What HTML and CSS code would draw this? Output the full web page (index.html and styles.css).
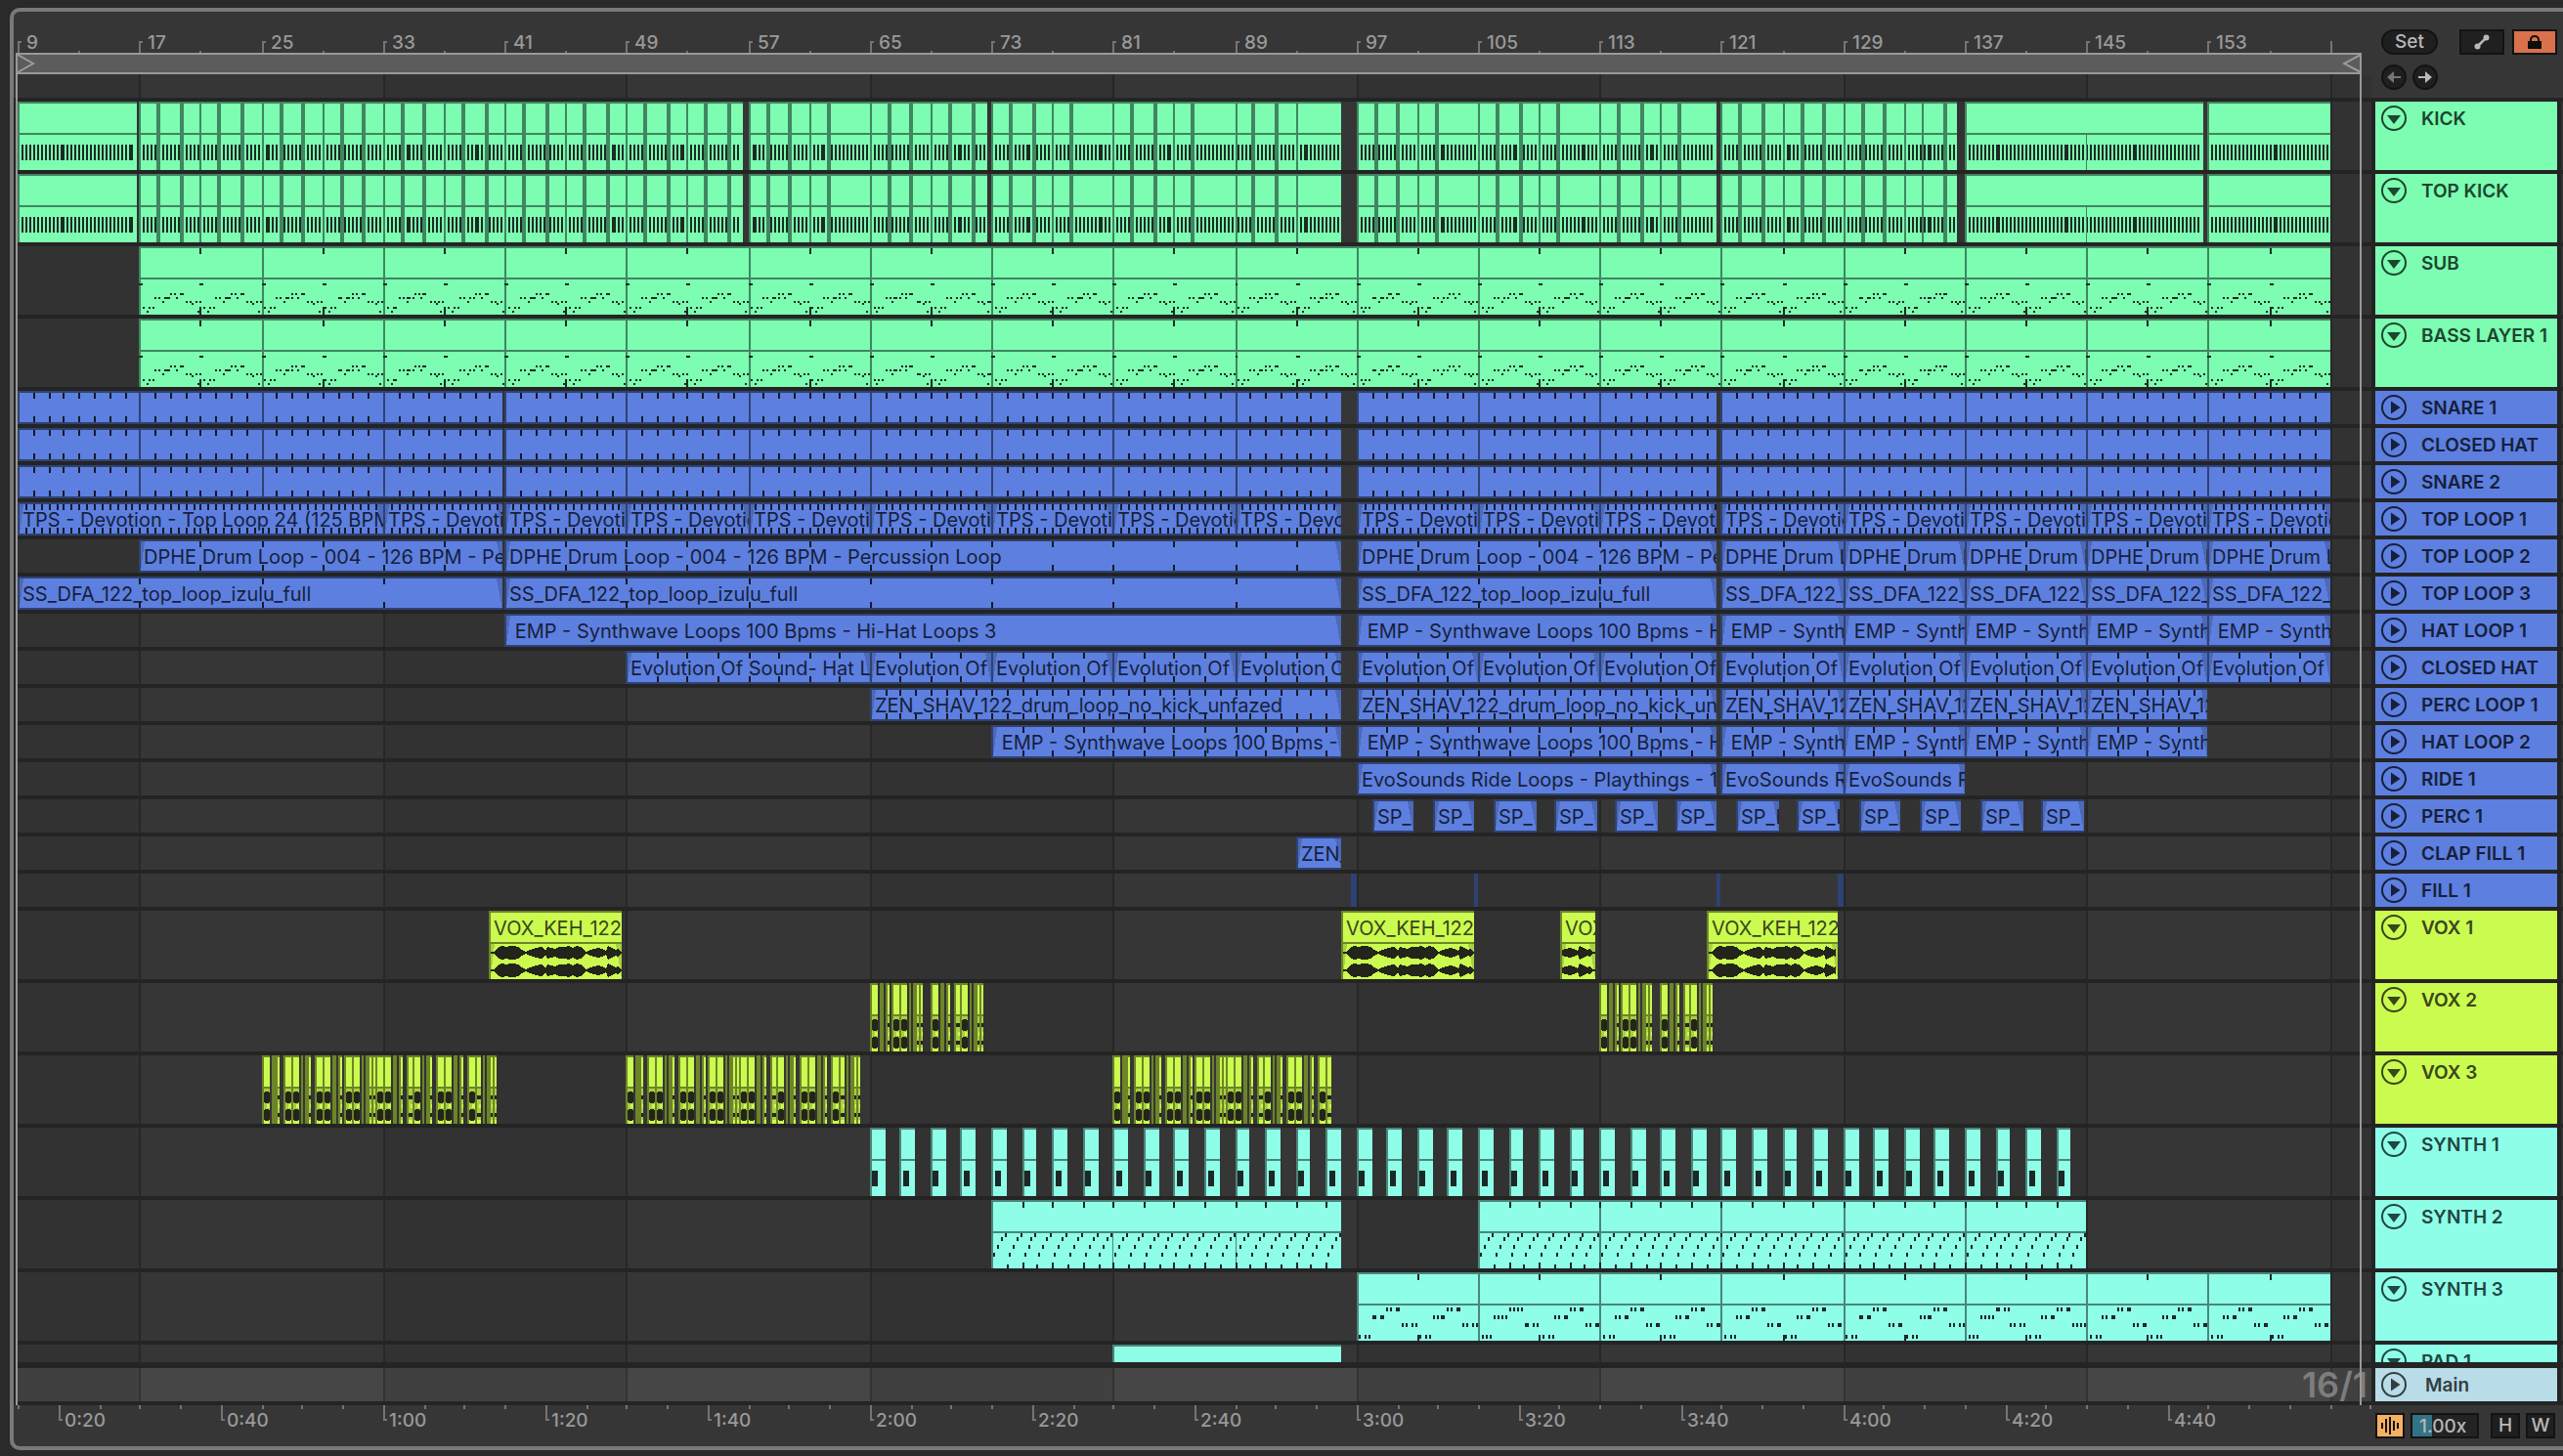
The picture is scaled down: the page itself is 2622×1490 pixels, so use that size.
FILE: index.html
```html
<!DOCTYPE html>
<html lang="en">
<head>
<meta charset="utf-8">
<title>Arrangement</title>
<link rel="stylesheet" href="styles.css">
</head>
<body>
<svg class="symbols" aria-hidden="true">
  <symbol id="unfolded" viewBox="0 0 26 26"><circle cx="13" cy="13" r="12" fill="none" stroke="currentColor" stroke-width="2"/><path d="M6 10h14l-7 9z" fill="currentColor"/></symbol>
  <symbol id="folded" viewBox="0 0 26 26"><circle cx="13" cy="13" r="12" fill="none" stroke="currentColor" stroke-width="2"/><path d="M10 6.500v13l9.500-6.500z" fill="currentColor"/></symbol>
</svg>
<main class="frame">
  <div class="arrange">
    <div class="top">
      <div class="scale">
        <div class="ruler" data-draw="bars"></div>
        <div class="loop">
          <svg width="20" height="18" viewBox="0 0 20 18"><path d="M2 0L18 9L2 18" fill="none" stroke="#9b9b9b" stroke-width="2"/></svg>
          <svg width="20" height="18" viewBox="0 0 20 18"><path d="M19 0L2 9L19 18" fill="none" stroke="#9b9b9b" stroke-width="2"/></svg>
        </div>
        <div class="lane strip" data-draw="empty"></div>
      </div>
      <div class="controls">
        <div class="controls-row">
          <button class="pill">Set</button>
          <span class="spacer"></span>
          <button class="box wide" aria-label="Automation mode"><svg width="16" height="16" viewBox="0 0 16 16"><path d="M3.500 12.500L12.500 3.500" stroke="#b8b8b8" stroke-width="2.500"/><circle cx="3.500" cy="12.500" r="3" fill="#b8b8b8"/><circle cx="12.500" cy="3.500" r="3" fill="#b8b8b8"/></svg></button>
          <button class="box wide lock" aria-label="Lock envelopes"><svg width="14" height="14" viewBox="0 0 14 14"><path d="M0 6h14v8H0z" fill="#0d0d0d"/><path d="M3 6V4.500a4 3.500 0 0 1 8 0V6" fill="none" stroke="#0d0d0d" stroke-width="2"/></svg></button>
        </div>
        <div class="controls-row">
          <button class="round dim" aria-label="Previous locator"><svg width="16" height="14" viewBox="0 0 16 14"><path d="M1 7L8 1v5h7v2H8v5z" fill="currentColor"/></svg></button>
          <button class="round" aria-label="Next locator"><svg width="16" height="14" viewBox="0 0 16 14"><path d="M15 7L8 1v5H1v2h7v5z" fill="currentColor"/></svg></button>
        </div>
      </div>
    </div>
    <div class="rows">
      <div class="row tall green"><div class="lane" data-draw="kick"></div><div class="head"><button class="fold" aria-label="Fold"><svg><use href="#unfolded"/></svg></button><span>KICK</span></div></div>
      <div class="row tall green"><div class="lane" data-draw="kick"></div><div class="head"><button class="fold" aria-label="Fold"><svg><use href="#unfolded"/></svg></button><span>TOP KICK</span></div></div>
      <div class="row tall green"><div class="lane" data-draw="sub"></div><div class="head"><button class="fold" aria-label="Fold"><svg><use href="#unfolded"/></svg></button><span>SUB</span></div></div>
      <div class="row tall green"><div class="lane" data-draw="sub"></div><div class="head"><button class="fold" aria-label="Fold"><svg><use href="#unfolded"/></svg></button><span>BASS LAYER 1</span></div></div>
      <div class="row blue"><div class="lane" data-draw="snare"></div><div class="head"><button class="fold" aria-label="Unfold"><svg><use href="#folded"/></svg></button><span>SNARE 1</span></div></div>
      <div class="row blue"><div class="lane" data-draw="snare"></div><div class="head"><button class="fold" aria-label="Unfold"><svg><use href="#folded"/></svg></button><span>CLOSED HAT</span></div></div>
      <div class="row blue"><div class="lane" data-draw="snare"></div><div class="head"><button class="fold" aria-label="Unfold"><svg><use href="#folded"/></svg></button><span>SNARE 2</span></div></div>
      <div class="row blue"><div class="lane" data-draw="top1"></div><div class="head"><button class="fold" aria-label="Unfold"><svg><use href="#folded"/></svg></button><span>TOP LOOP 1</span></div></div>
      <div class="row blue"><div class="lane" data-draw="top2"></div><div class="head"><button class="fold" aria-label="Unfold"><svg><use href="#folded"/></svg></button><span>TOP LOOP 2</span></div></div>
      <div class="row blue"><div class="lane" data-draw="top3"></div><div class="head"><button class="fold" aria-label="Unfold"><svg><use href="#folded"/></svg></button><span>TOP LOOP 3</span></div></div>
      <div class="row blue"><div class="lane" data-draw="hat1"></div><div class="head"><button class="fold" aria-label="Unfold"><svg><use href="#folded"/></svg></button><span>HAT LOOP 1</span></div></div>
      <div class="row blue"><div class="lane" data-draw="closed"></div><div class="head"><button class="fold" aria-label="Unfold"><svg><use href="#folded"/></svg></button><span>CLOSED HAT</span></div></div>
      <div class="row blue"><div class="lane" data-draw="perc"></div><div class="head"><button class="fold" aria-label="Unfold"><svg><use href="#folded"/></svg></button><span>PERC LOOP 1</span></div></div>
      <div class="row blue"><div class="lane" data-draw="hat2"></div><div class="head"><button class="fold" aria-label="Unfold"><svg><use href="#folded"/></svg></button><span>HAT LOOP 2</span></div></div>
      <div class="row blue"><div class="lane" data-draw="ride"></div><div class="head"><button class="fold" aria-label="Unfold"><svg><use href="#folded"/></svg></button><span>RIDE 1</span></div></div>
      <div class="row blue"><div class="lane" data-draw="perc1"></div><div class="head"><button class="fold" aria-label="Unfold"><svg><use href="#folded"/></svg></button><span>PERC 1</span></div></div>
      <div class="row blue"><div class="lane" data-draw="clap"></div><div class="head"><button class="fold" aria-label="Unfold"><svg><use href="#folded"/></svg></button><span>CLAP FILL 1</span></div></div>
      <div class="row blue"><div class="lane" data-draw="fill"></div><div class="head"><button class="fold" aria-label="Unfold"><svg><use href="#folded"/></svg></button><span>FILL 1</span></div></div>
      <div class="row tall lime"><div class="lane" data-draw="vox1"></div><div class="head"><button class="fold" aria-label="Fold"><svg><use href="#unfolded"/></svg></button><span>VOX 1</span></div></div>
      <div class="row tall lime"><div class="lane" data-draw="vox2"></div><div class="head"><button class="fold" aria-label="Fold"><svg><use href="#unfolded"/></svg></button><span>VOX 2</span></div></div>
      <div class="row tall lime"><div class="lane" data-draw="vox3"></div><div class="head"><button class="fold" aria-label="Fold"><svg><use href="#unfolded"/></svg></button><span>VOX 3</span></div></div>
      <div class="row tall cyan"><div class="lane" data-draw="synth1"></div><div class="head"><button class="fold" aria-label="Fold"><svg><use href="#unfolded"/></svg></button><span>SYNTH 1</span></div></div>
      <div class="row tall cyan"><div class="lane" data-draw="synth2"></div><div class="head"><button class="fold" aria-label="Fold"><svg><use href="#unfolded"/></svg></button><span>SYNTH 2</span></div></div>
      <div class="row tall cyan"><div class="lane" data-draw="synth3"></div><div class="head"><button class="fold" aria-label="Fold"><svg><use href="#unfolded"/></svg></button><span>SYNTH 3</span></div></div>
      <div class="row cut cyan"><div class="lane" data-draw="pad"></div><div class="head"><button class="fold" aria-label="Fold"><svg><use href="#unfolded"/></svg></button><span>PAD 1</span></div></div>
      <div class="row main"><div class="lane" data-draw="empty"><span class="grid-size">16/1</span></div><div class="head"><button class="fold" aria-label="Unfold"><svg><use href="#folded"/></svg></button><span>Main</span></div></div>
    </div>
  </div>
  <div class="bottom">
    <div class="ruler" data-draw="time"></div>
    <div class="footer">
      <button class="box wave" aria-label="Waveform zoom"><svg width="18" height="18" viewBox="0 0 18 18"><path d="M1 6v6M5 2v14M9 0v18M13 4v10M17 6v6" stroke="#141414" stroke-width="2"/></svg></button>
      <input class="zoom" aria-label="Waveform vertical zoom" value="1.00x">
      <button class="box key">H</button>
      <button class="box key">W</button>
    </div>
  </div>
</main>
<script src="script.js"></script>
</body>
</html>
```
FILE: styles.css
```css
* { box-sizing: border-box; }
body { margin: 0; background: #2a2a2a; font: 500 19px/24px Inter, "Liberation Sans", sans-serif; color: #999; overflow-x: hidden; }
button, input { font: inherit; margin: 0; padding: 0; border: 0; background: none; color: inherit; }
.symbols { position: absolute; width: 0; height: 0; }

.frame { margin: 8px 0 6px 10px; border: 4px solid #797979; border-right: 0; border-radius: 10px 0 0 10px; background: #363636; overflow: hidden; }
.arrange { position: relative; }
.arrange::before, .arrange::after { content: ""; position: absolute; z-index: 2; top: 42px; bottom: 0; width: 2px; background: #999; }
.arrange::before { left: 2px; }
.arrange::after { right: 206px; }

.top, .row, .bottom { display: grid; grid-template-columns: minmax(0, 1fr) 186px 2px; column-gap: 4px; padding-left: 4px; }
.ruler { position: relative; height: 42px; }
.ruler span { position: absolute; white-space: nowrap; }
.ruler[data-draw="bars"] span { top: 20px; }
.ruler[data-draw="time"] span { top: 4px; }
.loop { display: flex; justify-content: space-between; height: 22px; margin: 0 10px 0 -2px; border: solid #999; border-width: 2px 0; background: #5c5c5c; }
.strip { height: 24px; }

.controls { display: flex; flex-direction: column; gap: 10px; padding: 18px 0 0 6px; }
.controls-row { display: flex; gap: 8px; height: 26px; }
.controls-row:last-child { gap: 6px; }
.spacer { flex: 1; }
.pill, .round, .box { display: flex; align-items: center; justify-content: center; height: 26px; border: 2px solid #131313; background: #1f1f1f; color: #b8b8b8; }
.pill { width: 58px; border-radius: 13px; }
.round { width: 26px; border-radius: 13px; }
.dim { color: #757575; }
.wide { width: 46px; }
.lock { background: #d9714d; }

.rows { display: flex; flex-direction: column; gap: 4px; padding: 4px 0; background: #242424; }
.row { height: 34px; }
.row::after { content: ""; background: #323232; }
.tall { height: 70px; }
.cut { height: 18px; overflow: hidden; }
.main { margin-top: 2px; }
.lane { position: relative; min-width: 0; overflow: hidden; background: #323232; }
.lane svg, .ruler svg { display: block; position: absolute; left: 0; top: 0; width: 100%; height: 100%; shape-rendering: crispEdges; }
.head { display: flex; align-items: flex-start; gap: 15px; padding: 4px 0 0 6px; background: var(--clip); color: var(--ink); font-weight: 600; line-height: 28px; white-space: nowrap; overflow: hidden; }
.head span { flex: 1; }
.fold { flex: none; width: 26px; height: 26px; }
.fold svg { display: block; width: 26px; height: 26px; }
.cut .head { height: 70px; }
.main .head { gap: 19px; }

.green { --clip: #7dfdb1; --edge: #408660; --note: #1b2b23; --ink: #1c4630; }
.blue { --clip: #5d7fdf; --edge: #2e4273; --note: #141a28; --ink: #161f3c; --fade: #4d69b8; }
.lime { --clip: #cbfb4f; --edge: #6d8428; --note: #24251a; --ink: #39461a; --fade: #a8d040; }
.cyan { --clip: #8ffee9; --edge: #4b8679; --note: #1b2826; --ink: #1f4640; }
.main { --clip: #b8dce8; --ink: #343e42; }

.band { fill: #363636; }
.line { fill: #272727; }
.main .lane { background: #404040; }
.main .band { fill: #464646; }
.main .line { fill: #333; }
.clip { fill: var(--clip); }
.edge { fill: var(--edge); }
.note { fill: var(--note); }
.fade { fill: var(--fade); }
.tick { fill: #747474; }
.label { position: absolute; top: 4px; height: 28px; line-height: 28px; padding-left: 5px; overflow: hidden; white-space: pre; color: var(--ink); font-size: 20px; font-weight: 400; }
.grid-size { position: absolute; z-index: 1; right: 4px; top: 0; font-size: 36px; line-height: 34px; font-weight: 600; color: #7d7d7d; }

.bottom { height: 42px; }
.footer { display: flex; gap: 6px; padding-top: 8px; }
.wave { width: 30px; background: #f6b063; }
.zoom { width: 70px; height: 26px; margin-right: 6px; padding-left: 7px; border: 2px solid #131313; background: linear-gradient(90deg, #327487 20px, #232323 20px); color: #b8b8b8; }
.key { width: 30px; }
```
FILE: script.js
```js
const FIRST = 9, SPAN = 154.756, BEAT = 0.25, SECONDS_PER_BAR = 1.875;
const NS = 'http://www.w3.org/2000/svg';
const END1 = 40.85, END2 = 96, END3 = 120.65;

// Collects rectangles per class and writes them as one path each.
class Sheet {
  constructor(el) {
    this.el = el;
    this.w = el.clientWidth;
    this.h = el.parentElement.classList.contains('tall') ? 70 : el.clientHeight;
    this.layers = [];
    this.labels = [];
    this.collapsed = this.h < 40;
  }
  x(bar) { return 2 * Math.round((0.25 + (bar - FIRST) * this.w / SPAN) / 2); }
  path(cls, d) {
    const last = this.layers[this.layers.length - 1];
    if (last && last.cls === cls) last.d += d;
    else this.layers.push({ cls, d });
  }
  rect(cls, x, y, w, h) { this.path(cls, `M${x} ${y}h${w}v${h}h${-w}z`); }
  text(str, x, w) { this.labels.push({ str, x, w }); }
  commit() {
    this.el.querySelectorAll('svg, .label, .mark').forEach(n => n.remove());
    const svg = document.createElementNS(NS, 'svg');
    for (const { cls, d } of this.layers) {
      const p = document.createElementNS(NS, 'path');
      p.setAttribute('class', cls);
      p.setAttribute('d', d);
      svg.append(p);
    }
    this.el.prepend(svg);
    for (const { str, x, w } of this.labels) {
      const s = document.createElement('span');
      s.className = w ? 'label' : 'mark';
      s.textContent = str;
      s.style.left = x + 'px';
      if (w) s.style.width = w + 'px';
      this.el.append(s);
    }
  }
}

function background(s) {
  for (let b = 17; b < 163; b += 32) s.rect('band', s.x(b), 0, s.x(b + 16) - s.x(b), s.h);
  for (let b = 17; b < 163; b += 16) s.rect('line', s.x(b), 0, 2, s.h);
}

function clip(s, a, b, opt = {}) {
  const x = s.x(a), w = s.x(b) - x, h = s.h;
  s.rect('clip', x, 0, w, h);
  if (opt.fade) {
    const top = s.collapsed ? 2 : 34, f = Math.min(6, w / 3);
    s.path('fade', `M${x + 2} ${top}h${f - 2}L${x + 2} ${h - 2}z`);
    s.path('fade', `M${x + w} ${top}h${-f}L${x + w} ${h}z`);
  }
  s.rect('edge', x, 0, 2, h);
  s.rect('edge', x, 0, w, 2);
  if (s.collapsed && h > 20) s.rect('edge', x, h - 2, w, 2);
  if (!s.collapsed) s.rect('edge', x, 32, w, 2);
  if (opt.ticks) {
    for (let t = a + opt.ticks; t < b - 0.1; t += opt.ticks) {
      s.rect('note', s.x(t), 2, 2, 6);
      s.rect('note', s.x(t), h - 8, 2, 6);
    }
  }
  if (opt.label) s.text(opt.label, x, w);
}

function eights(from, to) {
  const out = [];
  for (let b = from; b < to; b += 8) out.push([b, Math.min(b + 8, to)]);
  return out;
}
const loops = (ranges, opt) => s => ranges.forEach(([a, b, label]) => clip(s, a, b, { fade: true, ...opt, label: label || opt.label }));

function kick(s) {
  const parts = [[9, 16.8], [17, 56.65], [57, 72.7], [73, 96], [97, END3], [121, 136.5], [137, 152.65], [153, 161]];
  const single = [61, 77, 85, 101, 109, 117];
  for (const [a, b] of parts) {
    clip(s, a, b);
    for (let t = a + BEAT; t < b - 0.15; t += BEAT) s.rect('note', s.x(t), 44, 2, 16);
    if (a === 9 || a >= 137) continue;
    for (let t = a; t < b; t += 4) {
      if (t > a) s.rect('edge', s.x(t), 0, 2, s.h);
      if (t === 93) continue;
      if (t === 133) {
        s.rect('edge', s.x(134.15), 0, 2, s.h);
        s.rect('edge', s.x(135.6), 0, 4, s.h);
        continue;
      }
      s.rect('edge', s.x(t + 1.15), 0, 4, s.h);
      if (!single.includes(t)) s.rect('edge', s.x(t + 2.65), 0, 4, s.h);
    }
  }
  s.rect('edge', s.x(145), 34, 1, s.h - 34);
}

const BASS = [[0, 38], [0.5, 38], [0.9, 62], [1.9, 66], [2.4, 62], [3.4, 62], [4, 52], [5, 52], [6, 56], [6.5, 52], [6.9, 52], [7.7, 52], [8.1, 48], [9.1, 48], [9.6, 52], [10.6, 48], [11.1, 48], [12.2, 56], [13.2, 56], [13.8, 58], [14.7, 56], [15.7, 56], [15.2, 66]];
function sub(s) {
  for (const [a, b] of eights(17, 161)) {
    clip(s, a, b);
    for (const p of [a, a + 4]) for (const [q, y] of BASS) s.rect('note', s.x(p + q * BEAT), y, 2, 2);
    s.rect('note', s.x(a + 4), 2, 2, 6);
    s.rect('note', s.x(a + 4), 62, 2, 8);
  }
}

function snare(s) {
  for (const [a, b] of [[9, END1], [41, END2], [97, END3], [121, 161]])
    for (const [p, q] of eights(a, b)) clip(s, p, q, { ticks: 1 });
}

const WAVE = [0, 1, 4, 1, 6, 4, 8, 6, 12, 7, 16, 6, 20, 7, 24, 7, 28, 6, 32, 3, 36, 1, 40, 3, 46, 5, 52, 6, 55, 4, 56, 2, 58, 6, 62, 5, 66, 4, 70, 6, 76, 6, 80, 7, 84, 5, 88, 7, 92, 6, 96, 2, 98, 1, 102, 3, 106, 4, 110, 5, 114, 4, 118, 2, 120, 7, 124, 5, 128, 3, 130, 4, 134, 1, 136, 1];
function vox1(s) {
  for (const [a, b, from] of [[40, 48.75, 0], [96, 104.7, 0], [110.45, 112.65, 102], [120, 128.7, 0]]) {
    clip(s, a, b, { fade: true, label: 'VOX_KEH_122' });
    const x = s.x(a) + 2, end = s.x(b);
    const pts = [];
    for (let i = 0; i < WAVE.length; i += 2) {
      const px = x + WAVE[i] - from;
      if (px >= x && px <= end) pts.push([px, WAVE[i + 1]]);
    }
    for (const cy of [43, 61]) {
      const up = pts.map(([px, v]) => `${px} ${cy - v}`);
      const down = pts.slice().reverse().map(([px, v]) => `${px} ${cy + v}`);
      s.path('note', 'M' + up.concat(down).join('L') + 'z');
    }
  }
}

// [edge start, body start, end] in sixty-secondths of four bars.
const CHOP_A = [[0, 2, 8], [10, 14, 14], [16, 18, 20], [22, 24, 30], [30, 32, 38], [40, 42, 42], [44, 48, 50], [50, 52, 54], [62, 64, 70], [72, 76, 76], [78, 80, 82], [86, 88, 92], [92, 94, 100], [102, 104, 104], [106, 110, 112], [112, 114, 116]];
const CHOP_B = [[0, 2, 8], [10, 16, 18], [22, 24, 30], [30, 32, 38], [40, 42, 42], [44, 48, 50], [54, 56, 62], [62, 64, 70], [72, 76, 76], [78, 80, 82], [84, 86, 92], [92, 94, 100], [102, 104, 104], [106, 110, 112], [112, 114, 116], [116, 118, 124], [124, 126, 132], [134, 138, 138], [140, 142, 144], [148, 150, 154], [154, 156, 162], [164, 166, 166], [168, 172, 174], [178, 180, 186], [186, 188, 194], [196, 200, 200], [202, 204, 206], [210, 212, 218], [218, 220, 224], [226, 228, 228], [230, 234, 236], [236, 238, 240]];
function chops(s, start, list, limit) {
  const x0 = s.x(start), k = s.w / SPAN / 15.56;
  const X = v => x0 + 2 * Math.round(v * k / 2);
  for (const [o, l, e] of list) {
    if (e > limit) break;
    const w = X(e) - X(l);
    s.rect('edge', X(o), 0, X(e) - X(o), s.h);
    if (!w) continue;
    s.rect('clip', X(l), 2, w, 30);
    s.rect('fade', X(l), 34, w, 36);
    s.rect('clip', X(l) + w / 2, 50, w / 2, 4);
    s.rect('clip', X(l), 66, w, 4);
    for (const cy of [43, 61]) {
      if (w > 4) s.path('note', `M${X(l)} ${cy - 5}l2 -1h${w - 4}l2 2v8l-2 2h${4 - w}l-2 -1z`);
      else s.rect('note', X(l), cy - 2, w, 4);
    }
  }
}

function synth1(s) {
  for (let b = 65; b < 144; b += 2) {
    clip(s, b, b + 1);
    s.rect('note', s.x(b + 0.2), 44, 6, 16);
  }
}
function synth2(s) {
  for (const [a, b] of [[73, 96], [105, 145]]) {
    clip(s, a, b);
    for (let t = a + 8; t < b; t += 8) s.rect('edge', s.x(t), a === 73 ? 34 : 0, a === 73 ? 1 : 2, s.h);
    for (let t = a; t < b; t++) {
      [54, 46, 38, 34].forEach((y, i) => s.rect('note', s.x(t + (i + 0.5) * BEAT), y, 2, 4));
      if (t === a) continue;
      const even = (t - a) % 2 === 0;
      if (even) s.rect('note', s.x(t), 2, 2, 6);
      s.rect('note', s.x(t), even ? 64 : 66, 2, even ? 6 : 4);
    }
  }
}
const ARP = [[0.8, 64], [2.3, 64], [3.3, 64], [4, 44], [5, 44], [6.4, 44], [7, 44], [8, 36], [9, 36], [10.5, 36], [11.1, 36], [12.1, 52], [13.1, 52], [14.6, 52], [15.3, 52]];
function synth3(s) {
  for (const [a, b] of eights(97, 161)) {
    clip(s, a, b);
    for (const p of [a, a + 4]) for (const [q, y] of ARP) s.rect('note', s.x(p + q * BEAT), y, 2, 4);
    s.rect('note', s.x(a + 4), 2, 2, 6);
    s.rect('note', s.x(a + 4), 64, 2, 6);
  }
}

const tail = to => eights(121, to);
const EMP = ' EMP - Synthwave Loops 100 Bpms - Hi-Hat Loops 3';
const draw = {
  empty() {},
  kick, sub, snare, vox1, synth1, synth2, synth3,
  top1: loops([[9, 33], [33, END1], ...eights(41, END2), ...eights(97, END3), ...tail(161)], { ticks: 0.5, label: 'TPS - Devotion - Top Loop 24 (125 BPM)' }),
  top2: loops([[17, END1], [41, END2], [97, END3], ...tail(161)], { ticks: 4, label: 'DPHE Drum Loop - 004 - 126 BPM - Percussion Loop' }),
  top3: loops([[9, END1], [41, END2], [97, END3], ...tail(161)], { ticks: 8, label: 'SS_DFA_122_top_loop_izulu_full' }),
  hat1: loops([[41, END2], [97, END3], ...tail(161)], { label: EMP }),
  closed: loops([[49, 65], ...eights(65, END2), ...eights(97, END3), ...tail(161)], { ticks: 2, label: 'Evolution Of Sound- Hat Loop' }),
  perc: loops([[65, END2], [97, END3], ...tail(153)], { ticks: 1, label: 'ZEN_SHAV_122_drum_loop_no_kick_unfazed' }),
  hat2: loops([[73, END2], [97, END3], ...tail(153)], { ticks: 2, label: EMP }),
  ride: loops([[97, END3], ...tail(137)], { label: 'EvoSounds Ride Loops - Playthings - 122' }),
  perc1: loops(Array.from({ length: 12 }, (_, i) => [98 + 4 * i, i === 5 ? END3 : 100.8 + 4 * i, i > 5 && i < 9 ? 'SP_L' : 'SP_']), {}),
  clap: loops([[93.05, 96]], { label: 'ZEN_' }),
  fill(s) { for (const [a, b] of [[96.7, 97], [104.7, 105], [END3, 121], [128.7, 129]]) s.rect('edge', s.x(a), 0, s.x(b) - s.x(a), s.h); },
  vox2(s) { chops(s, 65, CHOP_A, 116); chops(s, 113, CHOP_A, 116); },
  vox3(s) { chops(s, 25, CHOP_B, 240); chops(s, 49, CHOP_B, 240); chops(s, 81, CHOP_B, 224); },
  pad(s) { clip(s, 81, 96); },
  bars(s) {
    for (let b = 9; b <= 161; b += 4) {
      const x = s.x(b);
      if ((b - 9) % 8) { s.rect('tick', x, 40, 2, 2); continue; }
      s.rect('tick', x, 30, 2, 12);
      if (b === 161) continue;
      s.rect('tick', x, 30, 4, 2);
      s.text(String(b), x + 9);
    }
  },
  time(s) {
    for (let t = 15; t <= 305; t += 5) {
      const x = s.x(1 + t / SECONDS_PER_BAR);
      if (t % 20 || t === 300) { s.rect('tick', x, 0, 2, 4); continue; }
      s.rect('tick', x, 0, 2, 16);
      s.rect('tick', x, 14, 4, 2);
      s.text(Math.floor(t / 60) + ':' + String(t % 60).padStart(2, '0'), x + 6);
    }
  }
};

function render() {
  for (const el of document.querySelectorAll('[data-draw]')) {
    const s = new Sheet(el);
    if (el.classList.contains('lane')) background(s);
    draw[el.dataset.draw](s);
    s.commit();
  }
}
render();
addEventListener('resize', render);
```
